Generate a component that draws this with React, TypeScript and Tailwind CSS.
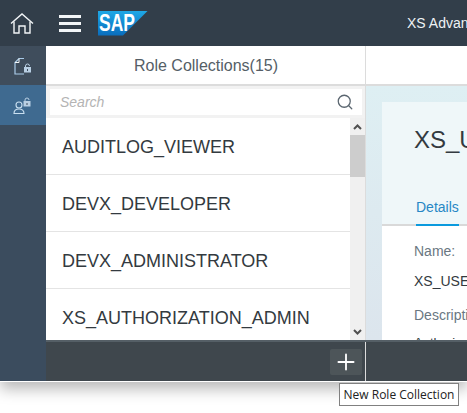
import { Plus, Search } from "lucide-react";

const collections = ["AUDITLOG_VIEWER", "DEVX_DEVELOPER", "DEVX_ADMINISTRATOR", "XS_AUTHORIZATION_ADMIN"];

function HomeIcon() {
  return (
    <svg width="24" height="21" viewBox="0 0 24 21" fill="none" stroke="#f2f5f7" strokeWidth="1.4">
      <path d="M1 10.500 12 1l11 9.500" />
      <path d="M4 8.500V20h5V13h6v7h5V8.500" />
    </svg>
  );
}

function Lock({ x, y }: { x: number; y: number }) {
  return (
    <g transform={`translate(${x} ${y})`}>
      <path d="M1.500 3V2a2 2 0 0 1 4 0" fill="none" stroke="#b9cfe3" strokeWidth="1" />
      <rect x="0" y="3" width="7" height="5.500" fill="#b9cfe3" />
      <rect x="3" y="5" width="1" height="2" fill="#3f4d5c" />
    </g>
  );
}

function FileLockIcon() {
  return (
    <svg width="18" height="18" viewBox="0 0 18 18" fill="none">
      <path d="M10 1.500H5L1 5.500V17h9" stroke="#a9cbe8" strokeWidth="1.2" />
      <path d="M5 1.500v4H1" stroke="#f2f5f7" strokeWidth="1" />
      <Lock x={10} y={7} />
    </svg>
  );
}

function UserLockIcon() {
  return (
    <svg width="20" height="18" viewBox="0 0 20 18" fill="none">
      <circle cx="6" cy="9" r="3" stroke="#c9dff0" strokeWidth="1.100" />
      <path d="M1 17.500c0-3 2-4.500 5-4.500s5 1.500 5 4.500z" stroke="#c9dff0" strokeWidth="1.100" />
      <Lock x={10.500} y={2} />
    </svg>
  );
}

function SapLogo() {
  return (
    <div className="relative h-[25px] w-[50px] bg-linear-to-b from-[#1fa8e6] to-[#0a6cbc] [clip-path:polygon(0_0,100%_0,50%_100%,0_100%)]">
      <span className="absolute left-[1px] top-[1px] origin-left scale-x-[0.76] text-[23px] leading-[22px] font-bold text-white">SAP</span>
    </div>
  );
}

function Chevron({ up }: { up?: boolean }) {
  return (
    <svg width="9" height="6" viewBox="0 0 9 6" fill="none" stroke="#505050" strokeWidth="2">
      <path d={up ? "M1 5 4.500 1.500 8 5" : "M1 1 4.500 4.500 8 1"} />
    </svg>
  );
}

export default function App() {
  return (
    <div className="relative h-[413px] w-[467px] overflow-hidden bg-white font-['Liberation_Sans',sans-serif]">
      <div className="flex h-[382px] flex-col border-b border-white shadow-[0_7px_14px_rgba(0,0,0,0.28)]">
        <header className="flex h-[46px] shrink-0 items-center bg-[#323e4a]">
          <div className="flex w-[46px] shrink-0 justify-center pr-[2px]"><HomeIcon /></div>
          <div className="ml-[13px] flex w-[22px] shrink-0 flex-col gap-[4px]">
            <span className="h-[3px] bg-[#f2f5f7]" />
            <span className="h-[3px] bg-[#f2f5f7]" />
            <span className="h-[3px] bg-[#f2f5f7]" />
          </div>
          <div className="ml-[17px] shrink-0"><SapLogo /></div>
          <span className="ml-[259px] whitespace-nowrap text-[14px] text-[#eef2f5]">XS Advanced</span>
        </header>

        <div className="flex min-h-0 flex-1">
          <nav className="flex w-[46px] shrink-0 flex-col bg-[#3b4c5e]">
            <div className="flex h-[39px] items-center justify-center bg-[#3f4d5c]"><FileLockIcon /></div>
            <div className="flex h-[40px] items-center justify-center bg-[#3f6a90]"><UserLockIcon /></div>
          </nav>

          <div className="flex min-w-0 flex-1 flex-col">
            <div className="flex min-h-0 flex-1">
              <section className="flex w-[320px] shrink-0 flex-col border-r border-[#dcdcdc]">
                <div className="flex h-[40px] shrink-0 items-center justify-center border-b-2 border-[#dcdcdc] pl-[1px] pt-[2px] text-[16px] text-[#555e66]">
                  Role Collections(15)
                </div>
                <div className="h-[32px] shrink-0 bg-[#f2f2f2] pl-[4px] pr-[3px] pt-[3px]">
                  <div className="flex h-[26px] items-center justify-between bg-white pl-[10px] pr-[8px]">
                    <span className="text-[14px] italic text-[#b4b4b4]">Search</span>
                    <Search size={18} strokeWidth={1.7} color="#5b6670" />
                  </div>
                </div>
                <div className="flex min-h-0 flex-1">
                  <ul className="min-w-0 flex-1 overflow-hidden">
                    {collections.map((name) => (
                      <li key={name} className="flex h-[57px] items-center border-b border-[#e4e4e4] pl-[16px] pt-[2px] text-[18px] text-[#333a40]">
                        {name}
                      </li>
                    ))}
                  </ul>
                  <div className="flex w-[15px] shrink-0 flex-col items-center bg-[#f0f0f0]">
                    <div className="flex h-[17px] w-full items-center justify-center"><Chevron up /></div>
                    <div className="h-[42px] w-full bg-[#cdcdcd]" />
                    <div className="flex-1" />
                    <div className="flex h-[17px] w-full items-center justify-center"><Chevron /></div>
                  </div>
                </div>
              </section>

              <section className="flex min-w-0 flex-1 flex-col">
                <div className="h-[40px] shrink-0 border-b-2 border-[#dcdcdc]" />
                <div className="min-h-0 flex-1 overflow-hidden bg-linear-to-b from-[#deeff3] to-[#dce5ed] pl-[16px] pt-[16px]">
                  <div className="h-[124px] w-[200px] border-b-2 border-[#d9d9d9] bg-[#eff7f9] pl-[32px]">
                    <h2 className="pt-[24px] text-[24px] leading-[28px] whitespace-nowrap text-[#333a40]">XS_USER</h2>
                    <div className="ml-[2px] mt-[44px] w-[43px] border-b-2 border-[#0a9ade] pb-[8px] text-[14px] leading-[18px] text-[#2787c5]">Details</div>
                  </div>
                  <div className="h-full w-[200px] bg-white pl-[32px] pt-[16px] text-[14px] whitespace-nowrap">
                    <p className="leading-[18px] text-[#6a7782]">Name:</p>
                    <p className="mt-[12px] leading-[18px] text-[#333a40]">XS_USER</p>
                    <p className="mt-[16px] leading-[18px] text-[#6a7782]">Description:</p>
                    <p className="mt-[10px] text-[13px] leading-[18px] text-[#333a40]">Authorization</p>
                  </div>
                </div>
              </section>
            </div>

            <footer className="flex h-[41px] shrink-0 border-t-2 border-[#555f66] bg-[#3f474d]">
              <div className="flex w-[320px] shrink-0 items-center justify-end border-r border-[#dcdcdc] pr-[3px]">
                <button className="flex h-[26px] w-[32px] items-center justify-center rounded-[2px] bg-[#4d5559]">
                  <Plus size={26} strokeWidth={1.7} color="#ffffff" />
                </button>
              </div>
            </footer>
          </div>
        </div>
      </div>

      <div className="absolute left-[339px] top-[383px] flex h-[23px] w-[120px] items-center justify-center border border-[#808080] bg-white font-['Open_Sans',sans-serif] text-[12px] whitespace-nowrap text-[#222]">
        New Role Collection
      </div>
    </div>
  );
}
